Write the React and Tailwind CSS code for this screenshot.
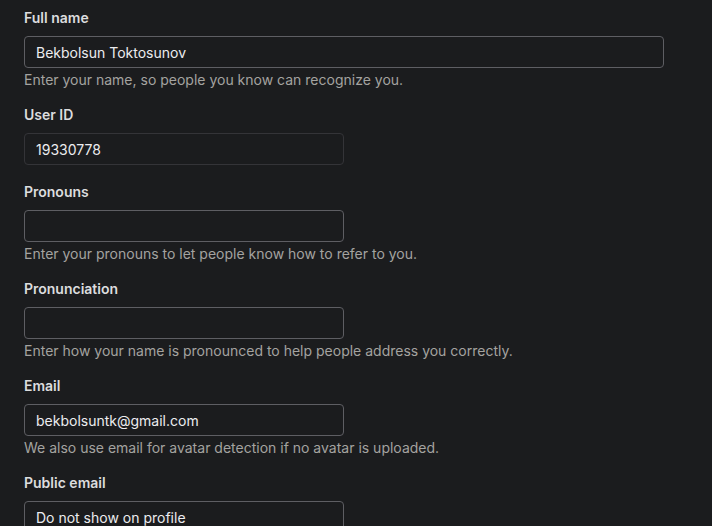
function Field({ label, value, help, wide, readOnly }) {
  return (
    <div className={help ? "mb-[15px]" : "mb-[17px]"}>
      <label className="block mb-2 text-sm leading-5 font-semibold text-[#dcdcde]">{label}</label>
      <input
        type="text"
        defaultValue={value}
        readOnly={readOnly}
        className={`block h-8 rounded px-[11px] text-sm bg-[#1b1c1e] text-[#ececef] outline-none border ${
          readOnly ? "border-[#343438]" : "border-[#5e5e63]"
        } ${wide ? "w-[640px]" : "w-[320px]"}`}
      />
      {help && <p className="mt-0.5 text-sm leading-5 text-[#a4a3a0]">{help}</p>}
    </div>
  );
}

export default function App() {
  return (
    <div
      className="min-h-screen bg-[#1b1c1e] pt-2 px-6 overflow-hidden"
      style={{ fontFamily: "Inter, 'Noto Sans', sans-serif" }}
    >
      <Field
        label="Full name"
        value="Bekbolsun Toktosunov"
        help="Enter your name, so people you know can recognize you."
        wide
      />
      <Field label="User ID" value="19330778" readOnly />
      <Field label="Pronouns" value="" help="Enter your pronouns to let people know how to refer to you." />
      <Field
        label="Pronunciation"
        value=""
        help="Enter how your name is pronounced to help people address you correctly."
      />
      <Field
        label="Email"
        value="bekbolsuntk@gmail.com"
        help="We also use email for avatar detection if no avatar is uploaded."
      />
      <Field label="Public email" value="Do not show on profile" />
    </div>
  );
}
